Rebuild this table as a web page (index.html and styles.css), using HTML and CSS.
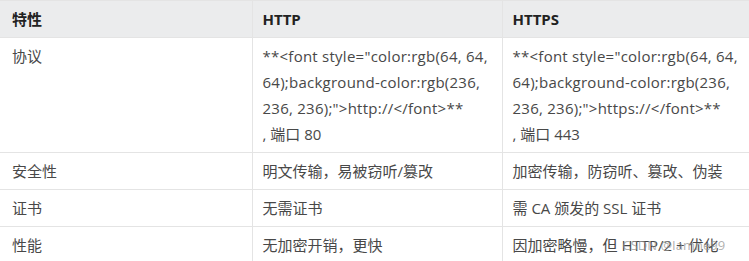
FILE: index.html
```html
<!DOCTYPE html>
<html lang="zh-CN">
<head>
<meta charset="utf-8">
<title>HTTP vs HTTPS</title>
<link rel="stylesheet" href="styles.css">
</head>
<body>
<div class="wrap">
<table class="cmp">
  <colgroup><col class="c1"><col class="c2"><col class="c3"></colgroup>
  <thead>
    <tr><th>特性</th><th>HTTP</th><th>HTTPS</th></tr>
  </thead>
  <tbody>
    <tr>
      <td>协议</td>
      <td><span class="code">**&lt;font style="color:rgb(64, 64, 64);background-color:rgb(236, 236, 236);"&gt;http://&lt;/font&gt;**</span><br>, 端口 80</td>
      <td><span class="code">**&lt;font style="color:rgb(64, 64, 64);background-color:rgb(236, 236, 236);"&gt;https://&lt;/font&gt;**</span><br>, 端口 443</td>
    </tr>
    <tr><td>安全性</td><td>明文传输，易被窃听/篡改</td><td>加密传输，防窃听、篡改、伪装</td></tr>
    <tr><td>证书</td><td>无需证书</td><td>需 CA 颁发的 SSL 证书</td></tr>
    <tr><td>性能</td><td>无加密开销，更快</td><td class="last">因加密略慢，但 HTTP/2 + 优化<span class="wm">CSDN @Iamne99</span></td></tr>
  </tbody>
</table>
</div>
</body>
</html>
```
FILE: styles.css
```css
html, body { margin: 0; padding: 0; background: #fff; }
body { overflow: hidden; width: 749px; height: 261px; }
.wrap { width: 760px; }
.cmp {
  border-collapse: collapse;
  table-layout: fixed;
  width: 752px;
  font-family: "Open Sans", "Noto Sans CJK SC", sans-serif;
  font-size: 15px;
  line-height: 26px;
  color: #484848;
}
.c1 { width: 252px; }
.c2 { width: 250px; }
.c3 { width: 250px; }
.cmp th, .cmp td {
  border: 1px solid #e4e4e4;
  padding: 5px 9px 5px 10px;
  text-align: left;
  vertical-align: top;
  word-wrap: break-word;
}
.cmp th:first-child, .cmp td:first-child { padding-left: 12px; border-left: none; }
.cmp th {
  background: #ebeced;
  color: #222;
  font-weight: 700;
}
.code { letter-spacing: 0.25px; }
.last { position: relative; }
.wm {
  position: absolute;
  left: 120px;
  top: 5px;
  font-size: 13px;
  color: rgba(150,150,150,0.75);
  white-space: nowrap;
}
```
